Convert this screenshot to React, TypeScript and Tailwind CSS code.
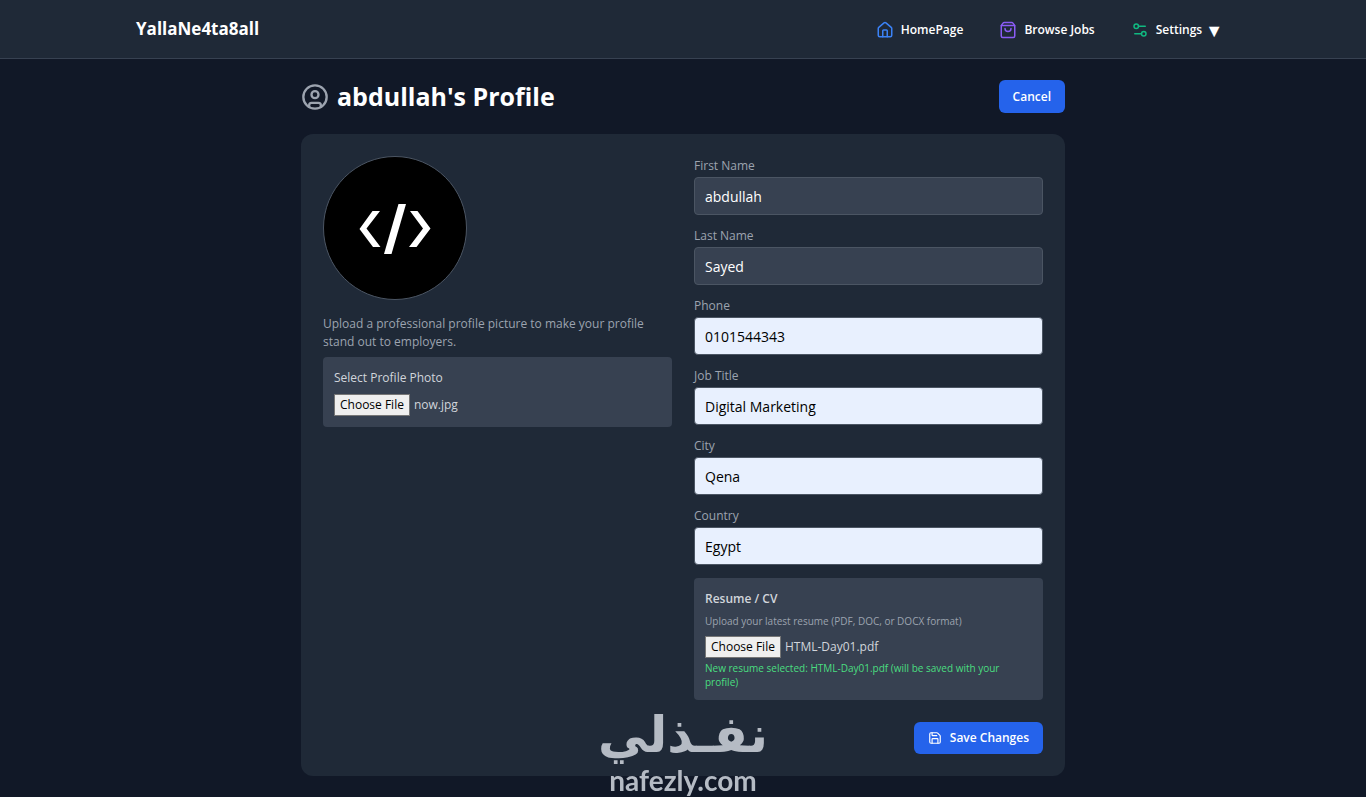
import React, { useEffect, useRef } from 'react';
import { CircleUser, House, Save, Settings2, ShoppingBag } from 'lucide-react';

type Field = {
  id: string;
  label: string;
  value: string;
  autofilled?: boolean;
};

const fields: Field[] = [
  { id: 'firstName', label: 'First Name', value: 'abdullah' },
  { id: 'lastName', label: 'Last Name', value: 'Sayed' },
  { id: 'phone', label: 'Phone', value: '0101544343', autofilled: true },
  { id: 'jobTitle', label: 'Job Title', value: 'Digital Marketing', autofilled: true },
  { id: 'city', label: 'City', value: 'Qena', autofilled: true },
  { id: 'country', label: 'Country', value: 'Egypt', autofilled: true },
];

function FileInput({ id, fileName, type }: { id: string; fileName: string; type: string }) {
  const ref = useRef<HTMLInputElement>(null);

  useEffect(() => {
    if (!ref.current) return;
    const transfer = new DataTransfer();
    transfer.items.add(new File([''], fileName, { type }));
    ref.current.files = transfer.files;
  }, [fileName, type]);

  return (
    <input
      ref={ref}
      id={id}
      type="file"
      className="block w-full text-xs leading-[18px] text-[#d1d5db] file:mr-1 file:border file:border-solid file:border-[#767676] file:bg-[#efefef] file:px-[5px] file:py-px file:text-black"
    />
  );
}

function Navbar() {
  return (
    <header className="border-b border-[#374151] bg-[#1f2937]">
      <div className="mx-auto flex h-[58px] max-w-[1094px] items-center justify-between">
        <a href="#" className="text-[17px] font-bold text-white">YallaNe4ta8all</a>
        <nav className="flex items-center gap-9 pt-0.5 pr-[7px] text-xs font-semibold text-white">
          <a href="#" className="flex items-center gap-[7px]">
            <House className="size-[18px] text-[#3b82f6]" />
            HomePage
          </a>
          <a href="#" className="flex items-center gap-[7px]">
            <ShoppingBag className="size-[18px] text-[#8b5cf6]" />
            Browse Jobs
          </a>
          <button type="button" className="flex items-center gap-[7px]">
            <Settings2 className="size-[18px] text-[#10b981]" />
            <span className="flex items-center gap-[3px]">
              Settings <span className="text-lg leading-none">▼</span>
            </span>
          </button>
        </nav>
      </div>
    </header>
  );
}

function Avatar() {
  return (
    <div className="size-36 overflow-hidden rounded-full border border-[#4b5563] bg-black">
      <svg viewBox="0 0 142 142" className="size-full" role="img" aria-label="Profile photo">
        <g fill="#fff">
          <path d="M48.500 54H56L42.500 71.500L56.500 90H49L35.500 72Z" />
          <path d="M74.500 47H82L67.500 97H60Z" />
          <path d="M86 54H93.500L106.500 71.500L92.500 90H85L99 71.500Z" />
        </g>
      </svg>
    </div>
  );
}

export default function App() {
  return (
    <div className="min-h-screen bg-[#111827] font-['Open_Sans',sans-serif]">
      <Navbar />

      <main className="mx-auto max-w-[806px] px-[21px] py-[21px]">
        <div className="mb-[21px] flex items-center justify-between">
          <h1 className="flex items-center gap-2 text-[25px] leading-[33px] font-bold text-white">
            <CircleUser className="size-7 text-[#9ca3af]" />
            abdullah's Profile
          </h1>
          <button type="button" className="h-[33px] rounded-md bg-[#2563eb] px-3.5 text-xs font-semibold text-white">
            Cancel
          </button>
        </div>

        <form className="rounded-xl bg-[#1f2937] p-[22px]" onSubmit={(e) => e.preventDefault()}>
          <div className="grid grid-cols-1 gap-[22px] md:grid-cols-2">
            <div>
              <Avatar />
              <p className="mt-[15px] max-w-[336px] text-xs leading-[18px] text-[#9ca3af]">
                Upload a professional profile picture to make your profile stand out to employers.
              </p>
              <div className="mt-1.5 rounded-sm bg-[#374151] p-[11px]">
                <label htmlFor="photo" className="mb-1.5 block text-xs leading-5 text-[#d1d5db]">
                  Select Profile Photo
                </label>
                <FileInput id="photo" fileName="now.jpg" type="image/jpeg" />
              </div>
            </div>

            <div>
              <div className="space-y-[11px]">
                {fields.map((field) => (
                  <div key={field.id}>
                    <label htmlFor={field.id} className="mb-px block text-xs leading-5 text-[#9ca3af]">
                      {field.label}
                    </label>
                    <input
                      id={field.id}
                      type="text"
                      defaultValue={field.value}
                      className={`block h-[38px] w-full rounded-sm border border-[#4b5563] px-2.5 text-sm ${
                        field.autofilled ? 'bg-[#e8f0fe] text-black' : 'bg-[#374151] text-white'
                      }`}
                    />
                  </div>
                ))}
              </div>

              {/* Resume */}
              <div className="mt-[13px] rounded-sm bg-[#374151] p-[11px]">
                <label htmlFor="resume" className="block text-xs leading-5 font-semibold text-[#d1d5db]">
                  Resume / CV
                </label>
                <p className="mt-[5px] mb-2 text-[10px] leading-[14px] text-[#9ca3af]">
                  Upload your latest resume (PDF, DOC, or DOCX format)
                </p>
                <FileInput id="resume" fileName="HTML-Day01.pdf" type="application/pdf" />
                <p className="mt-[3px] text-[10px] leading-[14px] text-[#4ade80]">
                  New resume selected: HTML-Day01.pdf (will be saved with your profile)
                </p>
              </div>
            </div>
          </div>

          <div className="mt-[22px] flex justify-end">
            <button
              type="submit"
              className="flex h-8 items-center gap-2 rounded-md bg-[#2563eb] px-3.5 text-xs font-semibold text-white"
            >
              <Save className="size-3.5" />
              Save Changes
            </button>
          </div>
        </form>
      </main>

      {/* Watermark */}
      <div className="pointer-events-none fixed inset-x-0 bottom-0 flex flex-col items-center text-[#b5bbc4]">
        <span lang="ar" dir="rtl" className="font-['DejaVu_Sans',sans-serif] text-[50px] leading-[58px] font-bold">نفـذلي</span>
        <span className="font-['Lato',sans-serif] text-[28px] leading-[33px] font-bold">nafezly.com</span>
      </div>
    </div>
  );
}
